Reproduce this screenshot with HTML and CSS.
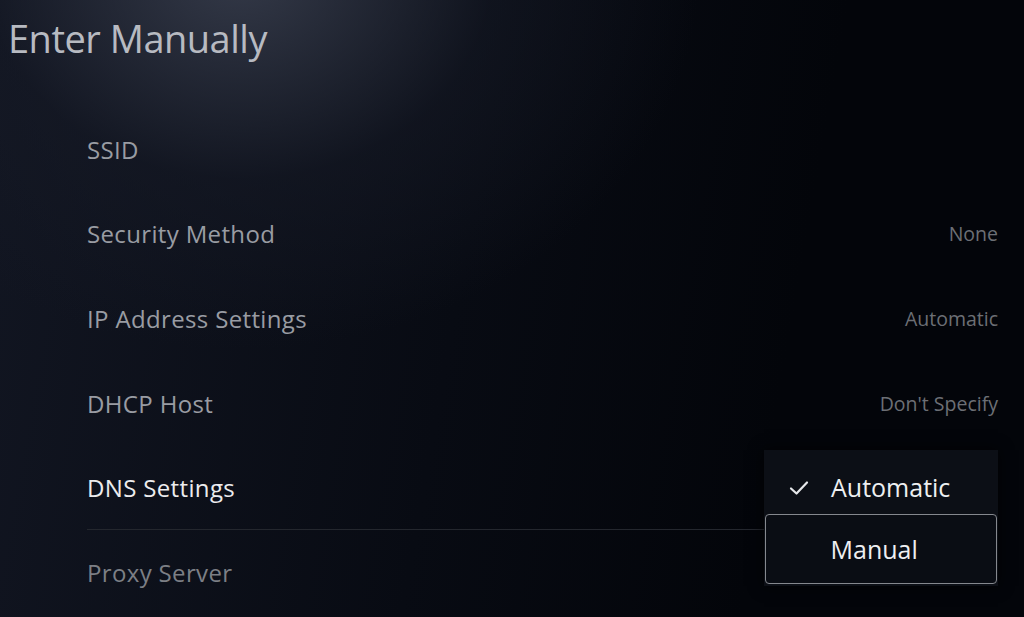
FILE: index.html
```html
<!DOCTYPE html>
<html lang="en">
<head>
    <meta charset="UTF-8">
    <title>Enter Manually</title>
    <link rel="stylesheet" href="styles.css">
</head>

<body>

<div class="screen">
    <h1 class="title">Enter Manually</h1>

    <ul class="settings-list">
        <li class="setting">
            <span class="setting-label">SSID</span>
        </li>
        <li class="setting">
            <span class="setting-label">Security Method</span>
            <span class="setting-value">None</span>
        </li>
        <li class="setting">
            <span class="setting-label">IP Address Settings</span>
            <span class="setting-value">Automatic</span>
        </li>
        <li class="setting">
            <span class="setting-label">DHCP Host</span>
            <span class="setting-value">Don't Specify</span>
        </li>
        <li class="setting focused">
            <span class="setting-label">DNS Settings</span>
        </li>
        <li class="setting dim">
            <span class="setting-label">Proxy Server</span>
        </li>
    </ul>

    <!-- options popup for the focused row -->
    <div class="dropdown">
        <div class="option selected">
            <svg class="check" width="20" height="16" viewBox="0 0 20 16">
                <path d="M2 8.5 L7.5 13.5 L18 2.5" fill="none" stroke="#e6e7ea" stroke-width="2.2" stroke-linecap="round" stroke-linejoin="round"/>
            </svg>
            <span>Automatic</span>
        </div>
        <div class="option active">
            <span>Manual</span>
        </div>
    </div>
</div>

</body>
</html>
```

FILE: styles.css
```css
:root {
    --bg-deep: #03050a;
    --label-color: #999ca3;
    --value-color: #6c6f75;
    --rule-color: #24272e;
}

html, body {
    margin: 0;
    height: 100%;
}

body {
    background-color: var(--bg-deep);
    font-family: "Open Sans", "Noto Sans", sans-serif;
    overflow: hidden;
}

.screen {
    position: relative;
    width: 1024px;
    height: 617px;
    background-image:
        radial-gradient(ellipse 460px 380px at 240px -30px, rgba(62, 68, 84, 0.8), rgba(22, 26, 38, 0.55) 55%, rgba(5, 7, 12, 0) 100%),
        linear-gradient(100deg, #121622 0%, #080b13 45%, var(--bg-deep) 75%);
}

.title {
    margin: 0;
    padding: 13px 0 0 8px;
    height: 94px;
    font-size: 38px;
    font-weight: 400;
    line-height: 50px;
    color: #b7bac1;
    letter-spacing: -0.5px;
}

.settings-list {
    list-style: none;
    margin: 0;
    padding: 0 26px 0 87px;
}

.setting {
    display: flex;
    align-items: center;
    justify-content: space-between;
    height: 84.6px;
}

.setting-label {
    font-size: 24px;
    letter-spacing: 0.35px;
    color: var(--label-color);
}

.setting-value {
    font-size: 19.5px;
    color: var(--value-color);
}

.setting.focused {
    border-bottom: 1px solid var(--rule-color);
    height: 83.6px;
}
.setting.focused .setting-label {
    color: #ececee;
}
.setting.dim .setting-label {
    color: #7c7f85;
}

/* popup */

.dropdown {
    position: absolute;
    left: 764px;
    top: 450px;
    width: 234px;
    height: 136px;
    box-sizing: border-box;
    padding-top: 1px;
    background-color: #0c0f16;
    box-shadow: 0 0 14px rgba(0, 0, 0, 0.7);
}

.option {
    display: flex;
    align-items: center;
    box-sizing: border-box;
    height: 63px;
    padding-left: 67px;
    font-size: 25px;
    color: #eeeff1;
    position: relative;
}

.option.selected {
    padding-top: 8px;
}

.option .check {
    position: absolute;
    left: 25px;
    top: 29px;
}

.option.active {
    height: 70px;
    margin: 0 1px;
    border: 1.5px solid #85888e;
    border-radius: 4px;
    padding-left: 64.5px;
    background-color: #0a0d14;
}
```
